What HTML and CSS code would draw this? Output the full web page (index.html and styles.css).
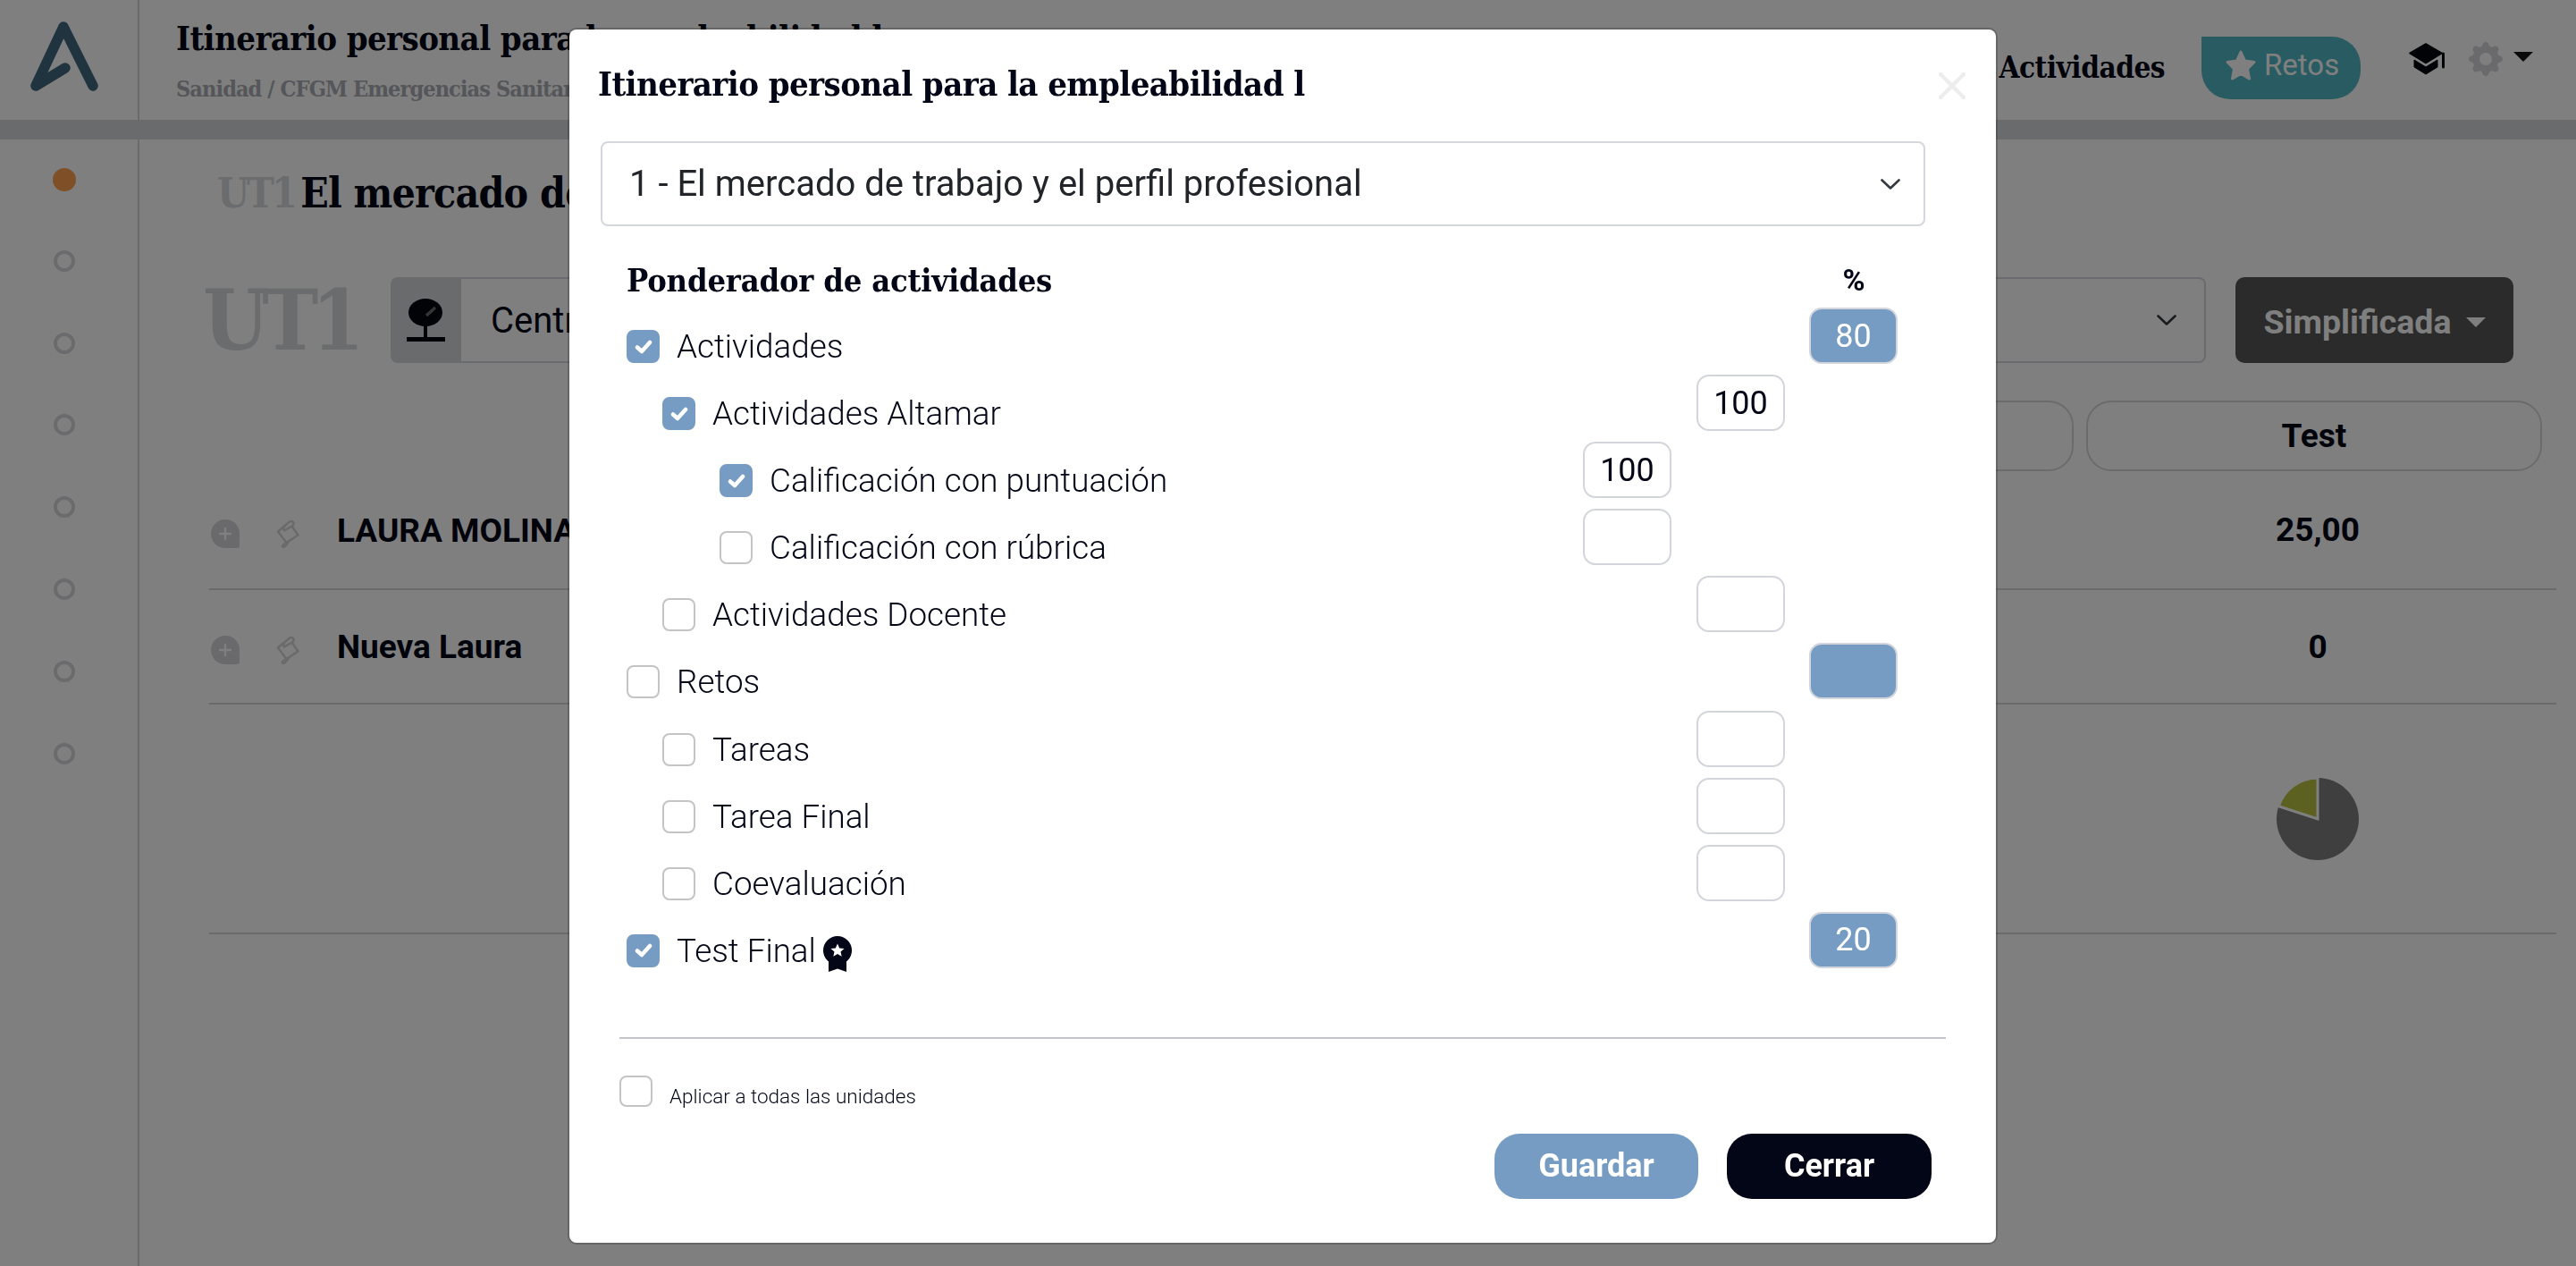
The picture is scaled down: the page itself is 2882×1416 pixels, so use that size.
FILE: index.html
```html
<!DOCTYPE html>
<html lang="es">
<head>
  <meta charset="UTF-8" />
  <meta name="viewport" content="width=device-width, initial-scale=1.0" />
  <title>Itinerario personal para la empleabilidad l</title>
  <link rel="stylesheet" href="styles.css">
</head>
<body>
  <svg class="icon-defs" width="0" height="0">
    <symbol id="tick" viewBox="0 0 20 16">
      <path d="M3 8.5 L8 13 L17 3" fill="none" stroke="#fff" stroke-width="4.5" stroke-linecap="round" stroke-linejoin="round"/>
    </symbol>
    <symbol id="chevron" viewBox="0 0 22 12">
      <path d="M1.5 1.5 L11 10.5 L20.5 1.5" fill="none" stroke="currentColor" stroke-width="2.6" stroke-linecap="round" stroke-linejoin="round"/>
    </symbol>
    <symbol id="add" viewBox="0 0 32 32">
      <path d="M16 0 C7 0 0 7 0 16 C0 25 7 32 16 32 H29 Q32 32 32 29 V16 C32 7 25 0 16 0 Z" fill="#d4d5d8"/>
      <path d="M16 10 V22 M10 16 H22" stroke="#fff" stroke-width="2.4" stroke-linecap="round"/>
    </symbol>
    <symbol id="scroll" viewBox="0 0 26 32">
      <path d="M15 2.5 L2 13.5 L11.5 26 L24.500 17.500 L17.500 7.500 M15 2.500 Q18.500 1 19.500 4 Q20 6 17.500 7.500 L9 12.500 Q7 9 9.500 7.500 M11.500 26 L7.500 28.500 Q6 30.500 8 31 Q10.500 31 14 24.500" fill="none" stroke="#d4d5d8" stroke-width="2.500" stroke-linejoin="round" stroke-linecap="round"/>
    </symbol>
  </svg>

  <div class="page">
    <header class="topbar">
      <div class="logo-cell">
        <svg class="logo" viewBox="0 0 76 78">
          <path d="M39 52 L6 72 L37 6 L70 72" fill="none" stroke="#40687e" stroke-width="11.500" stroke-linecap="round" stroke-linejoin="round"/>
        </svg>
      </div>
      <div class="course">
        <div class="course-name">Itinerario personal para la empleabilidad l</div>
        <div class="course-path">Sanidad / CFGM Emergencias Sanitarias</div>
      </div>
      <nav class="topnav">
        <a class="nav-link">Actividades</a>
        <a class="retos-btn">
          <svg class="star" viewBox="0 0 36 36">
            <path d="M18 3 L22.500 13 L33 14.500 L25.500 22 L27.500 33 L18 27.500 L8.500 33 L10.500 22 L3 14.500 L13.500 13 Z" fill="#fff" stroke="#fff" stroke-width="3" stroke-linejoin="round"/>
          </svg>
          Retos
        </a>
        <svg class="cap" viewBox="0 0 42 36">
          <path d="M19 1 L37 11.500 L19 22.500 L1 11.500 Z" fill="#05070f" stroke="#05070f" stroke-width="1.500" stroke-linejoin="round"/>
          <path d="M6 19 L19 27 L32 19 V27 L19 35 L6 27 Z" fill="#05070f" stroke="#05070f" stroke-width="1" stroke-linejoin="round"/>
          <path d="M38.500 12 V27" stroke="#05070f" stroke-width="3" stroke-linecap="round"/>
        </svg>
        <svg class="gear" viewBox="0 0 16 16">
          <path d="M9.405 1.05c-.413-1.4-2.397-1.4-2.81 0l-.1.34a1.464 1.464 0 0 1-2.105.872l-.31-.17c-1.283-.698-2.686.705-1.987 1.987l.169.311c.446.82.023 1.841-.872 2.105l-.34.1c-1.4.413-1.4 2.397 0 2.81l.34.1a1.464 1.464 0 0 1 .872 2.105l-.17.31c-.698 1.283.705 2.686 1.987 1.987l.311-.169a1.464 1.464 0 0 1 2.105.872l.1.34c.413 1.4 2.397 1.4 2.81 0l.1-.34a1.464 1.464 0 0 1 2.105-.872l.31.17c1.283.698 2.686-.705 1.987-1.987l-.169-.311a1.464 1.464 0 0 1 .872-2.105l.34-.1c1.4-.413 1.4-2.397 0-2.81l-.34-.1a1.464 1.464 0 0 1-.872-2.105l.17-.31c.698-1.283-.705-2.686-1.987-1.987l-.311.169a1.464 1.464 0 0 1-2.105-.872l-.1-.34zM8 10.93a2.929 2.929 0 1 1 0-5.858 2.929 2.929 0 0 1 0 5.858z" fill="#d4d5d8"/>
        </svg>
        <span class="caret"></span>
      </nav>
    </header>
    <div class="strip"></div>

    <div class="workspace">
      <aside class="steps">
        <span class="step is-current"></span>
        <span class="step"></span>
        <span class="step"></span>
        <span class="step"></span>
        <span class="step"></span>
        <span class="step"></span>
        <span class="step"></span>
        <span class="step"></span>
      </aside>

      <main class="content">
        <h1 class="unit-title"><span class="unit-code">UT1</span> El mercado de trabajo y el perfil profesional</h1>

        <div class="filters">
          <div class="unit-big">UT1</div>
          <div class="center-group">
            <div class="center-addon">
              <svg class="webcam" viewBox="0 0 44 48">
                <ellipse cx="21" cy="15.500" rx="19" ry="15.500" fill="#05070f"/>
                <path d="M22 19 L32 10" stroke="#6a6b6d" stroke-width="3.500"/>
                <path d="M21 30 V44" stroke="#05070f" stroke-width="4"/>
                <path d="M0 45.500 H43" stroke="#05070f" stroke-width="5"/>
              </svg>
            </div>
            <div class="center-select">
              <span>Centro de formación</span>
              <svg class="chevron"><use href="#chevron"/></svg>
            </div>
          </div>
          <button class="view-btn">Simplificada <span class="caret caret-light"></span></button>
        </div>

        <div class="pills">
          <div class="pill pill-wide">Actividades</div>
          <div class="pill pill-test">Test</div>
        </div>

        <div class="student">
          <svg class="row-icon"><use href="#add"/></svg>
          <svg class="row-icon row-icon-scroll"><use href="#scroll"/></svg>
          <div class="student-name">LAURA MOLINA</div>
          <div class="student-score">25,00</div>
        </div>
        <div class="student student-short">
          <svg class="row-icon"><use href="#add"/></svg>
          <svg class="row-icon row-icon-scroll"><use href="#scroll"/></svg>
          <div class="student-name">Nueva Laura</div>
          <div class="student-score">0</div>
        </div>
        <div class="student student-chart">
          <div class="student-score">
            <svg class="pie" viewBox="0 0 92 92">
              <circle cx="46" cy="46" r="46" fill="#7f7f7f"/>
              <path d="M46 46 L46 0 A46 46 0 0 0 2.300 31.800 Z" fill="#b8c040" stroke="#fff" stroke-width="3"/>
            </svg>
          </div>
        </div>
      </main>
    </div>
  </div>

  <div class="backdrop"></div>

  <section class="modal">
    <div class="modal-head">
      <h2 class="modal-title">Itinerario personal para la empleabilidad l</h2>
      <svg class="modal-close" viewBox="0 0 30 30">
        <path d="M2 2 L28 28 M28 2 L2 28" stroke="#ededed" stroke-width="4.500" stroke-linecap="round"/>
      </svg>
    </div>

    <div class="unit-select">
      <span>1 - El mercado de trabajo y el perfil profesional</span>
      <svg class="chevron"><use href="#chevron"/></svg>
    </div>

    <div class="weights-head">
      <h3 class="weights-title">Ponderador de actividades</h3>
      <span class="weights-pct">%</span>
    </div>

    <div class="weight lvl-0">
      <span class="weight-label"><span class="check is-on"><svg><use href="#tick"/></svg></span>Actividades</span>
      <input class="weight-input is-total" type="text" value="80">
    </div>
    <div class="weight lvl-1">
      <span class="weight-label"><span class="check is-on"><svg><use href="#tick"/></svg></span>Actividades Altamar</span>
      <input class="weight-input" type="text" value="100">
    </div>
    <div class="weight lvl-2">
      <span class="weight-label"><span class="check is-on"><svg><use href="#tick"/></svg></span>Calificación con puntuación</span>
      <input class="weight-input" type="text" value="100">
    </div>
    <div class="weight lvl-2">
      <span class="weight-label"><span class="check"></span>Calificación con rúbrica</span>
      <input class="weight-input" type="text" value="">
    </div>
    <div class="weight lvl-1">
      <span class="weight-label"><span class="check"></span>Actividades Docente</span>
      <input class="weight-input" type="text" value="">
    </div>
    <div class="weight lvl-0">
      <span class="weight-label"><span class="check"></span>Retos</span>
      <input class="weight-input is-total" type="text" value="">
    </div>
    <div class="weight lvl-1">
      <span class="weight-label"><span class="check"></span>Tareas</span>
      <input class="weight-input" type="text" value="">
    </div>
    <div class="weight lvl-1">
      <span class="weight-label"><span class="check"></span>Tarea Final</span>
      <input class="weight-input" type="text" value="">
    </div>
    <div class="weight lvl-1">
      <span class="weight-label"><span class="check"></span>Coevaluación</span>
      <input class="weight-input" type="text" value="">
    </div>
    <div class="weight lvl-0">
      <span class="weight-label"><span class="check is-on"><svg><use href="#tick"/></svg></span>Test Final
        <svg class="badge" viewBox="0 0 32 40">
          <path d="M6 24 V40 L16 36.500 L26 40 V24 Z" fill="#030616"/>
          <circle cx="16" cy="16" r="16" fill="#030616"/>
          <path d="M16 8.500 L18.200 13.500 L23.500 14 L19.500 17.500 L20.700 22.700 L16 20 L11.300 22.700 L12.500 17.500 L8.500 14 L13.800 13.500 Z" fill="#fff"/>
        </svg>
      </span>
      <input class="weight-input is-total" type="text" value="20">
    </div>

    <hr class="modal-rule">

    <div class="apply-all">
      <span class="check check-small"></span>
      <span class="apply-text">Aplicar a todas las unidades</span>
    </div>

    <div class="modal-actions">
      <button class="btn btn-save">Guardar</button>
      <button class="btn btn-close">Cerrar</button>
    </div>
  </section>
</body>
</html>
```

FILE: styles.css
```css
* { box-sizing: border-box; }
html, body { margin: 0; height: 100%; overflow: hidden; }
body { font-family: Roboto, "Liberation Sans", sans-serif; color: #030616; background: #fff; }
.icon-defs { position: absolute; }

.page { height: 1416px; display: flex; flex-direction: column; }

/* top bar */
.topbar { height: 134px; display: flex; align-items: stretch; }
.logo-cell { width: 156px; border-right: 2px solid #d6d7da; padding: 24px 0 0 34px; }
.logo { width: 76px; height: 78px; display: block; }
.course { padding: 21px 0 0 41px; white-space: nowrap; }
.course-name { font: 700 38px/44px "DejaVu Serif Condensed", "DejaVu Serif", serif; letter-spacing: -0.6px; }
.course-path { font: 700 25px/32px "DejaVu Serif Condensed", "DejaVu Serif", serif; color: #a8acb3; margin-top: 19px; letter-spacing: -0.9px; }
.topnav { margin-left: auto; display: flex; align-items: flex-start; padding-right: 48px; }
.nav-link { font: 700 33px/44px "DejaVu Serif Condensed", "DejaVu Serif", serif; margin: 54px 41px 0 0; letter-spacing: -0.5px; }
.retos-btn { width: 178px; height: 70px; margin-top: 41px; padding: 0 0 7px 26px; background: #50b6c4; border-radius: 0 32px 32px 32px; color: #fff; font-size: 33px; display: flex; align-items: center; gap: 8px; }
.star { width: 36px; height: 36px; }
.cap { width: 42px; height: 36px; margin: 48px 0 0 54px; }
.gear { width: 38px; height: 38px; margin: 47px 0 0 25px; }
.caret { display: inline-block; width: 0; height: 0; border-left: 11px solid transparent; border-right: 11px solid transparent; border-top: 11px solid #141416; margin: 58px 0 0 12px; }
.strip { height: 22px; background: #d4d6da; }

/* left rail */
.workspace { flex: 1; display: flex; }
.steps { width: 156px; border-right: 2px solid #d6d7da; padding-right: 10px; display: flex; flex-direction: column; align-items: center; }
.step { width: 24px; height: 24px; margin: 33.900px 0; border: 4px solid #d6d7da; border-radius: 50%; }
.step.is-current { width: 26px; height: 26px; margin: 32px 0 32px; background: #ff9e50; border: 0; }

/* content */
.content { flex: 1; padding-right: 22px; min-width: 0; overflow: hidden; }
.unit-title { margin: 30px 0 0 87px; font: 700 46px/60px "DejaVu Serif Condensed", "DejaVu Serif", serif; letter-spacing: -0.8px; white-space: nowrap; }
.unit-code { color: #d6d8dc; letter-spacing: -3px; margin-right: -7px; }
.filters { display: flex; margin-top: 64px; margin-left: 71px; height: 96px; align-items: stretch; padding-right: 48px; }
.unit-big { width: 210px; font: 700 94px/96px "DejaVu Serif Condensed", "DejaVu Serif", serif; color: #d6d8dc; letter-spacing: -7.500px; }
.center-group { flex: 1; display: flex; margin-right: 33px; }
.center-addon { width: 79px; background: #d4d6da; border-radius: 8px 0 0 8px; display: flex; align-items: center; justify-content: center; }
.webcam { width: 44px; height: 48px; }
.center-select { flex: 1; border: 2px solid #d3d7dc; border-left: 0; border-radius: 0 8px 8px 0; font-size: 40px; display: flex; align-items: center; justify-content: space-between; padding: 0 31px 0 33px; }
.chevron { width: 22px; height: 12px; color: #343a40; }
.view-btn { width: 311px; background: #565656; color: #fff; border: 0; border-radius: 10px; padding-top: 5px; font: 700 37.500px Roboto, sans-serif; display: flex; align-items: center; justify-content: center; gap: 16px; }
.caret-light { border-top-color: #fff; margin: 0; }
.pills { display: flex; justify-content: flex-end; gap: 14px; margin-top: 42px; height: 79px; padding-right: 16px; }
.pill { border: 2px solid #d6d7da; border-radius: 28px; font-weight: 700; font-size: 37px; display: flex; align-items: center; justify-content: center; }
.pill-wide { width: 520px; }
.pill-test { width: 510px; }
.student { height: 133px; margin-left: 78px; border-bottom: 2px solid #d6d7da; display: flex; align-items: center; }
.student-short { height: 128px; }
.student-chart { height: 257px; }
.row-icon { width: 32px; height: 32px; margin: 8px 41px 0 2px; flex: none; }
.row-icon-scroll { width: 26px; margin: 8px 42px 0 0; }
.student-name { font-weight: 700; font-size: 37px; margin-top: 1px; }
.student-score { width: 534px; margin-left: auto; text-align: center; font-weight: 700; font-size: 37px; }
.pie { width: 92px; height: 92px; display: block; margin: 0 auto; }

/* modal */
.backdrop { position: fixed; inset: 0; background: rgba(0, 0, 0, 0.5); }
.modal { position: fixed; left: 637px; top: 33px; width: 1596px; height: 1357px; background: #fff; border-radius: 8px; box-shadow: 0 0 0 2px rgba(0, 0, 0, 0.2); }
.modal-head { height: 125px; display: flex; align-items: center; justify-content: space-between; padding: 0 34px 0 32px; }
.modal-title { margin: -4px 0 0; font: 700 38px/44px "DejaVu Serif Condensed", "DejaVu Serif", serif; letter-spacing: -0.6px; }
.modal-close { width: 30px; height: 30px; }
.unit-select { height: 95px; margin: 0 79px 0 35px; border: 2px solid #d3d7dc; border-radius: 8px; font-size: 40px; color: #212529; display: flex; align-items: center; justify-content: space-between; padding: 0 26px 0 30px; }
.weights-head { height: 91px; padding: 38px 109px 0 64px; display: flex; justify-content: space-between; }
.weights-title { margin: 0; font: 700 36px/44px "DejaVu Serif Condensed", "DejaVu Serif", serif; letter-spacing: -0.2px; }
.weights-pct { width: 100px; margin-top: 2px; text-align: center; font-weight: 700; font-size: 34px; line-height: 40px; }
.weight { height: 75.100px; display: flex; justify-content: space-between; align-items: flex-start; }
.lvl-0 { padding: 0 110px 0 64px; }
.lvl-1 { padding: 0 236px 0 104px; }
.lvl-2 { padding: 0 363px 0 168px; }
.weight-label { display: flex; align-items: center; gap: 19px; height: 37px; margin-top: 25px; font-size: 36.800px; font-weight: 300; }
.check { width: 37px; height: 37px; flex: none; border: 2px solid #c4c4c6; border-radius: 8px; display: flex; align-items: center; justify-content: center; }
.check svg { width: 20px; height: 16px; }
.check.is-on { background: #779cc3; border-color: #779cc3; }
.weight-input { width: 99px; height: 63px; border: 2px solid #d3d5dc; border-radius: 14px; background: #fff; color: #030616; font: 400 36px Roboto, sans-serif; text-align: center; padding: 0; }
.weight-input.is-total { background: #779cc3; color: #fff; }
.badge { width: 32px; height: 40px; margin: 7px 0 0 -11px; }
.modal-rule { margin: 65px 56px 0; border: 0; border-top: 2px solid #c4c4c8; }
.apply-all { display: flex; margin: 41px 0 0 56px; gap: 19px; }
.check-small { height: 35px; }
.apply-text { font-size: 22.500px; font-weight: 300; line-height: 28px; margin-top: 9px; }
.modal-actions { display: flex; justify-content: flex-end; gap: 32px; margin-top: 28px; padding-right: 72px; }
.btn { width: 228px; height: 73px; border: 0; border-radius: 28px; color: #fff; font: 700 36px Roboto, sans-serif; }
.btn-save { background: #779cc3; }
.btn-close { width: 229px; background: #030616; }
```
